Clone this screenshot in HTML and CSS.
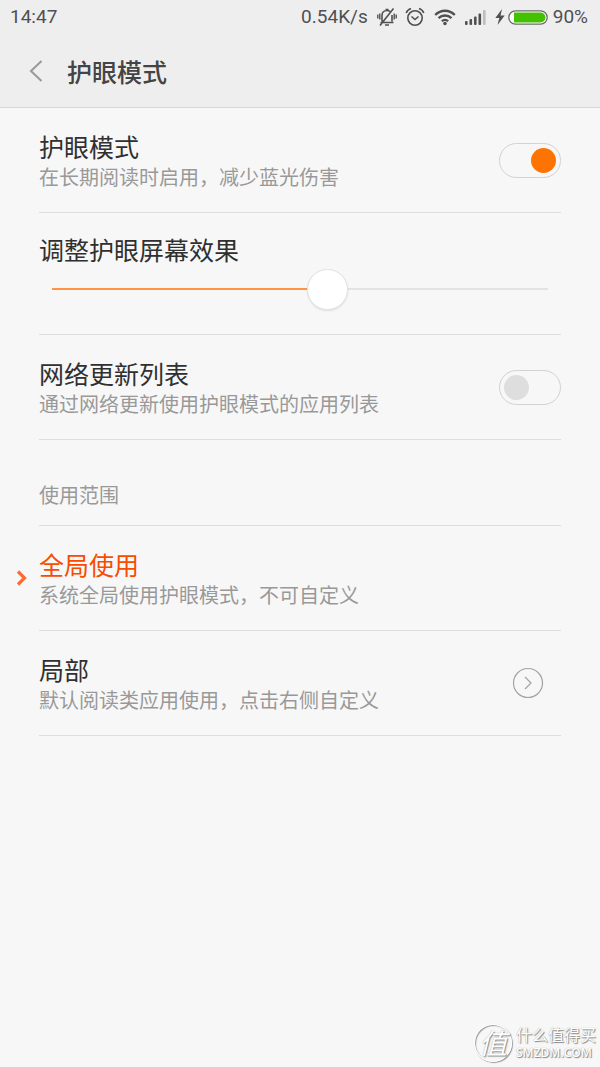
FILE: index.html
```
<!DOCTYPE html>
<html lang='zh-CN'>
<head>
	<meta charset='UTF-8'>
	<meta name='viewport' content='width=device-width, initial-scale=1'>
	<title>护眼模式</title>
	<link rel="stylesheet" href="styles.css">
</head>
<body>
<div class='status-bar'>
	<span>14:47</span>
	<div class='status-bar__right'>
		<span class='status-bar__speed'>0.54K/s</span>
		<svg class='status-bar__bell' width='20' height='20' viewBox='0 0 20 20' fill='none' stroke='#505050' stroke-width='1.6'>
			<path d='M5 14.5V8.500C5 5.500 7 3.500 10 3.500c1.200 0 2.200.3 3 1M15 8v6.500M3.500 15.500h13M8.500 2.500h3M8 18h4M3 18.500L16.500 1.500' />
			<path d='M2.800 6.500v6M.8 7.500v4M17.200 6.500v6M19.200 7.500v4' stroke-width='1.4' />
		</svg>
		<svg class='status-bar__alarm' width='20' height='20' viewBox='0 0 20 20' fill='none' stroke='#505050' stroke-width='1.6'>
			<circle cx='10' cy='11' r='7.2' />
			<path d='M6.500 9.500l3.500 3 3.500-3M1.200 6C2 3.800 3.500 2.300 6 1.500M18.800 6C18 3.800 16.500 2.300 14 1.500' />
		</svg>
		<svg class='status-bar__wifi' width='22' height='18' viewBox='0 0 22 18' fill='none' stroke='#505050' stroke-width='2.3'>
			<path d='M1.200 7C6.800 1.300 15.200 1.300 20.800 7M4.500 10.200c3.800-3.600 9.200-3.600 13 0M7.800 13.200c2-1.700 4.400-1.700 6.400 0' />
			<circle cx='11' cy='15.5' r='1.8' fill='#505050' stroke='none' />
		</svg>
		<svg class='status-bar__signal' width='21' height='16' viewBox='0 0 21 16' fill='#505050'>
			<rect x='0' y='12' width='2.6' height='4' rx='1' />
			<rect x='4.5' y='10' width='2.6' height='6' rx='1' />
			<rect x='9' y='7.5' width='2.6' height='8.5' rx='1' />
			<rect x='13.5' y='4.5' width='2.6' height='11.5' rx='1' />
			<rect x='18' y='1' width='2.6' height='15' rx='1' fill='#bdbdbd' />
		</svg>
		<svg class='status-bar__bolt' width='10' height='16' viewBox='0 0 10 16' fill='#505050'>
			<path d='M7 0L.3 9h4L2.500 16 9.700 6.500H5.500z' />
		</svg>
		<svg class='status-bar__battery' width='40' height='15' viewBox='0 0 40 15'>
			<rect x='.8' y='.8' width='38.4' height='13.4' rx='6.7' fill='#fff' stroke='#6a6a6a' stroke-width='1.3' />
			<path d='M6 2.500h26.500a5 5 0 0 1 0 10H6z' fill='#43c100' />
		</svg>
		<span>90%</span>
	</div>
</div>

<header class='header'>
	<button class='header__back' type='button' aria-label='返回'>
		<svg width='14' height='22' viewBox='0 0 14 22' fill='none' stroke='#999' stroke-width='2'>
			<path d='M12.500 1L2 11l10.500 10' />
		</svg>
	</button>
	<h1 class='header__title'>护眼模式</h1>
</header>

<main class='settings'>
	<div class='item'>
		<label class='item__text' for='eyeMode'>
			<span class='item__title'>护眼模式</span>
			<span class='item__description'>在长期阅读时启用，减少蓝光伤害</span>
		</label>
		<input class='switch' id='eyeMode' type='checkbox' checked />
	</div>

	<div class='item item_slider'>
		<label class='item__title' for='effect'>调整护眼屏幕效果</label>
		<input class='slider' id='effect' type='range' min='0' max='100' value='56' />
	</div>

	<div class='item'>
		<label class='item__text' for='updateList'>
			<span class='item__title'>网络更新列表</span>
			<span class='item__description'>通过网络更新使用护眼模式的应用列表</span>
		</label>
		<input class='switch' id='updateList' type='checkbox' />
	</div>

	<h2 class='section-title'>使用范围</h2>

	<button class='item item_selected' type='button'>
		<svg class='item__marker' width='12' height='16' viewBox='0 0 12 16' fill='none' stroke='#ff6a33' stroke-width='3.2'>
			<path d='M2 1.500L8.500 8 2 14.500' />
		</svg>
		<span class='item__text'>
			<span class='item__title'>全局使用</span>
			<span class='item__description'>系统全局使用护眼模式，不可自定义</span>
		</span>
	</button>

	<div class='item'>
		<div class='item__text'>
			<span class='item__title'>局部</span>
			<span class='item__description'>默认阅读类应用使用，点击右侧自定义</span>
		</div>
		<button class='item__more' type='button' aria-label='自定义'>
			<svg width='32' height='32' viewBox='0 0 32 32' fill='none' stroke='#a3a3a3' stroke-width='1.2'>
				<circle cx='16' cy='16' r='14.5' />
				<path d='M13 10l6 6-6 6' />
			</svg>
		</button>
	</div>
</main>

<footer class='watermark'>
	<span class='watermark__logo'>值</span>
	<div class='watermark__text'>
		<span class='watermark__name'>什么值得买</span>
		<span class='watermark__site'>SMZDM.COM</span>
	</div>
</footer>

<script>
	// keep the coloured part of the track under the thumb
	const slider = document.getElementById('effect');
	const updateTrack = () => slider.style.setProperty('--value', `${slider.value}%`);
	slider.addEventListener('input', updateTrack);
	updateTrack();
</script>
</body>
</html>
```
FILE: styles.css
```
:root {
    --color-text: #303030;
    --color-text-secondary: #999;
    --color-line: #dedede;
    --color-accent: #ff7300;
    --color-bar: #eee;
    --padding-side: 39px;
}

* {
    box-sizing: border-box;
}

body {
    display: flex;
    flex-direction: column;
    min-height: 100vh;
    margin: 0;
    background-color: #f7f7f7;
    color: var(--color-text);
    font-family: "Noto Sans CJK SC", sans-serif;
}

button {
    padding: 0;
    border: 0;
    background: none;
    font: inherit;
    cursor: pointer;
}

svg {
    display: block;
    flex-shrink: 0;
}

.status-bar {
    display: flex;
    justify-content: space-between;
    height: 34px;
    padding: 0 12px 0 10px;
    background-color: var(--color-bar);
    color: #505050;
    font-family: Roboto, sans-serif;
    font-size: 19px;
    line-height: 34px;
}

.status-bar__right {
    display: flex;
    align-items: center;
}

.status-bar__speed,
.status-bar__alarm,
.status-bar__wifi,
.status-bar__signal {
    margin-right: 9px;
}

.status-bar__bell {
    margin-right: 8px;
}

.status-bar__bolt {
    margin-right: 3px;
}

.status-bar__battery {
    margin-right: 5px;
}

.header {
    display: flex;
    align-items: center;
    height: 74px;
    padding: 0 29px;
    background-color: var(--color-bar);
    border-bottom: 1px solid #d8d8d8;
}

.header__back {
    margin-right: 24px;
}

.header__title {
    margin: 0;
    color: #444;
    font-size: 25px;
    font-weight: 500;
    line-height: 32px;
}

.settings {
    padding: 0 var(--padding-side);
}

.item {
    position: relative;
    display: flex;
    align-items: center;
    justify-content: space-between;
    width: 100%;
    min-height: 105px;
    border-bottom: 1px solid var(--color-line);
    text-align: left;
}

.item_slider {
    display: block;
    min-height: 122px;
    padding-top: 20px;
}

.item__text {
    display: block;
    padding-top: 2px;
}

.item__title {
    display: block;
    font-size: 25px;
    line-height: 32px;
}

.item__description {
    display: block;
    color: var(--color-text-secondary);
    font-size: 20px;
    line-height: 30px;
}

.item_selected {
    justify-content: flex-start;
}

.item_selected .item__title {
    color: #f84c00;
}

.item__marker {
    position: absolute;
    left: -23px;
}

.item__more {
    margin-right: 17px;
}

.switch {
    appearance: none;
    display: flex;
    align-items: center;
    flex-shrink: 0;
    width: 62px;
    height: 35px;
    margin: 0;
    padding: 0 4px;
    border: 1px solid #d2d2d2;
    border-radius: 18px;
}

.switch::before {
    content: '';
    width: 25px;
    height: 25px;
    border-radius: 50%;
    background-color: #dedede;
}

.switch:checked {
    justify-content: flex-end;
}

.switch:checked::before {
    background-color: var(--color-accent);
}

.slider {
    --value: 50%;
    appearance: none;
    display: block;
    width: calc(100% - 26px);
    height: 48px;
    margin: 0 13px;
    background: linear-gradient(to right, #ff9544 var(--value), #e3e3e3 var(--value)) center / 100% 2px no-repeat;
}

.slider::-webkit-slider-thumb {
    appearance: none;
    width: 41px;
    height: 41px;
    border: 1px solid #e2e2e2;
    border-radius: 50%;
    background-color: #fff;
    box-shadow: 0 1px 2px rgba(0, 0, 0, 0.1);
}

.section-title {
    margin: 0;
    padding: 40px 0 15px;
    border-bottom: 1px solid var(--color-line);
    color: var(--color-text-secondary);
    font-size: 20px;
    font-weight: 400;
    line-height: 30px;
}

.watermark {
    display: flex;
    align-items: center;
    justify-content: flex-end;
    gap: 4px;
    margin-top: auto;
    padding: 0 4px 5px;
    color: #fff;
    text-shadow: 1px 1px 1px #888, 0 0 1px #999;
}

.watermark__logo {
    width: 38px;
    height: 38px;
    border: 1px solid #fff;
    border-radius: 50%;
    box-shadow: 1px 1px 1px #999, inset 1px 1px 1px #999;
    font-size: 28px;
    font-style: italic;
    line-height: 34px;
    text-align: center;
}

.watermark__text {
    display: flex;
    flex-direction: column;
}

.watermark__name {
    font-size: 16px;
    line-height: 20px;
}

.watermark__site {
    font-family: "Open Sans", sans-serif;
    font-size: 12px;
    font-weight: 600;
    line-height: 18px;
}
```
